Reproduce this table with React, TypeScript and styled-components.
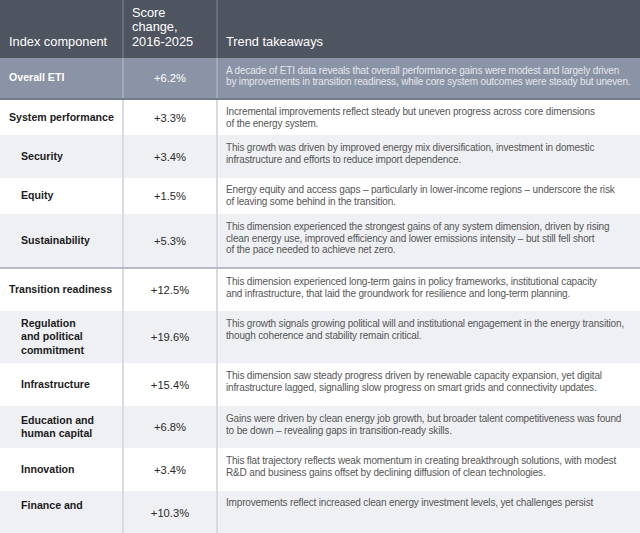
import React from "react";
import styled, { createGlobalStyle } from "styled-components";

const Global = createGlobalStyle`
  html, body { margin: 0; padding: 0; background: #ffffff; overflow: hidden; }
  body { font-family: "Liberation Sans", Helvetica, Arial, sans-serif; }
  * { box-sizing: border-box; }
`;

const Table = styled.div`
  width: 640px;
  display: flex;
  flex-direction: column;
`;

type Tone = "header" | "overall" | "white" | "gray";

const bgOf: Record<Tone, string> = {
  header: "#4f5461",
  overall: "#8b93a6",
  white: "#ffffff",
  gray: "#eff0f3",
};
const lineOf: Record<Tone, string> = {
  header: "#686d79",
  overall: "#a2a9b8",
  white: "#d8dbe1",
  gray: "#d8dbe1",
};

const Row = styled.div<{ $h: number; $tone: Tone; $rule?: string }>`
  display: grid;
  grid-template-columns: 124px 94px 1fr;
  height: ${(p) => p.$h}px;
  background: ${(p) => bgOf[p.$tone]};
  border-bottom: ${(p) => (p.$rule ? `2px solid ${p.$rule}` : "none")};
  --line: ${(p) => lineOf[p.$tone]};
`;

const HeadCell = styled.div<{ $left?: number }>`
  display: flex;
  align-items: flex-end;
  padding: 0 6px 9px ${(p) => p.$left ?? 9}px;
  color: #ffffff;
  font-size: 12.8px;
  line-height: 14.5px;
  border-right: 2px solid var(--line);
  &:last-child { border-right: none; }
`;

const Label = styled.div<{ $indent?: boolean; $top?: boolean; $light?: boolean }>`
  display: flex;
  align-items: ${(p) => (p.$top ? "flex-start" : "center")};
  padding: ${(p) => (p.$top ? "8px" : "0")} 2px 0 ${(p) => (p.$indent ? 21 : 9)}px;
  font-size: 10.6px;
  line-height: 13.5px;
  font-weight: 700;
  white-space: nowrap;
  color: ${(p) => (p.$light ? "#ffffff" : "#1c1c1c")};
  border-right: 2px solid var(--line);
`;

const Value = styled.div<{ $light?: boolean }>`
  display: flex;
  align-items: center;
  justify-content: center;
  font-size: 11.2px;
  color: ${(p) => (p.$light ? "#ffffff" : "#2b2b2b")};
  border-right: 2px solid var(--line);
`;

const Desc = styled.div<{ $light?: boolean; $pt?: number; $lh?: number }>`
  padding: ${(p) => p.$pt ?? 7}px 4px 0 8px;
  font-size: 10px;
  letter-spacing: -0.16px;
  line-height: ${(p) => p.$lh ?? 11.8}px;
  white-space: nowrap;
  color: ${(p) => (p.$light ? "#e4e7ec" : "#565656")};
`;

type Item = {
  label: string[];
  value: string;
  desc: string[];
  h: number;
  tone: Tone;
  indent?: boolean;
  rule?: string;
  top?: boolean;
  pt?: number;
  lh?: number;
};

const items: Item[] = [
  {
    label: ["System performance"],
    value: "+3.3%",
    desc: [
      "Incremental improvements reflect steady but uneven progress across core dimensions",
      "of the energy system.",
    ],
    h: 35,
    tone: "white",
    pt: 6,
  },
  {
    label: ["Security"],
    value: "+3.4%",
    desc: [
      "This growth was driven by improved energy mix diversification, investment in domestic",
      "infrastructure and efforts to reduce import dependence.",
    ],
    h: 43,
    tone: "gray",
    indent: true,
  },
  {
    label: ["Equity"],
    value: "+1.5%",
    desc: [
      "Energy equity and access gaps \u2013 particularly in lower-income regions \u2013 underscore the risk",
      "of leaving some behind in the transition.",
    ],
    h: 36,
    tone: "white",
    indent: true,
    pt: 6,
  },
  {
    label: ["Sustainability"],
    value: "+5.3%",
    desc: [
      "This dimension experienced the strongest gains of any system dimension, driven by rising",
      "clean energy use, improved efficiency and lower emissions intensity \u2013 but still fell short",
      "of the pace needed to achieve net zero.",
    ],
    h: 55,
    tone: "gray",
    indent: true,
    rule: "#b7bbc3",
    lh: 11.5,
  },
  {
    label: ["Transition readiness"],
    value: "+12.5%",
    desc: [
      "This dimension experienced long-term gains in policy frameworks, institutional capacity",
      "and infrastructure, that laid the groundwork for resilience and long-term planning.",
    ],
    h: 42,
    tone: "white",
  },
  {
    label: ["Regulation", "and political", "commitment"],
    value: "+19.6%",
    desc: [
      "This growth signals growing political will and institutional engagement in the energy transition,",
      "though coherence and stability remain critical.",
    ],
    h: 52,
    tone: "gray",
    indent: true,
  },
  {
    label: ["Infrastructure"],
    value: "+15.4%",
    desc: [
      "This dimension saw steady progress driven by renewable capacity expansion, yet digital",
      "infrastructure lagged, signalling slow progress on smart grids and connectivity updates.",
    ],
    h: 43,
    tone: "white",
    indent: true,
  },
  {
    label: ["Education and", "human capital"],
    value: "+6.8%",
    desc: [
      "Gains were driven by clean energy job growth, but broader talent competitiveness was found",
      "to be down \u2013 revealing gaps in transition-ready skills.",
    ],
    h: 42,
    tone: "gray",
    indent: true,
  },
  {
    label: ["Innovation"],
    value: "+3.4%",
    desc: [
      "This flat trajectory reflects weak momentum in creating breakthrough solutions, with modest",
      "R&D and business gains offset by declining diffusion of clean technologies.",
    ],
    h: 43,
    tone: "white",
    indent: true,
  },
  {
    label: ["Finance and"],
    value: "+10.3%",
    desc: ["Improvements reflect increased clean energy investment levels, yet challenges persist"],
    h: 43,
    tone: "gray",
    indent: true,
    top: true,
    pt: 6,
  },
];

const Lines: React.FC<{ lines: string[] }> = ({ lines }) => (
  <span>
    {lines.map((l, i) => (
      <React.Fragment key={i}>
        {l}
        {i < lines.length - 1 && <br />}
      </React.Fragment>
    ))}
  </span>
);

export default function App() {
  return (
    <>
      <Global />
      <Table>
        <Row $h={58} $tone="header">
          <HeadCell>Index component</HeadCell>
          <HeadCell $left={8}>
            <Lines lines={["Score", "change,", "2016-2025"]} />
          </HeadCell>
          <HeadCell $left={8}>Trend takeaways</HeadCell>
        </Row>
        <Row $h={42} $tone="overall" $rule="#737b8d">
          <Label $light>Overall ETI</Label>
          <Value $light>+6.2%</Value>
          <Desc $light $pt={6.5} $lh={11}>
            <Lines
              lines={[
                "A decade of ETI data reveals that overall performance gains were modest and largely driven",
                "by improvements in transition readiness, while core system outcomes were steady but uneven.",
              ]}
            />
          </Desc>
        </Row>
        {items.map((it, i) => (
          <Row key={i} $h={it.h} $tone={it.tone} $rule={it.rule}>
            <Label $indent={it.indent} $top={it.top}>
              <Lines lines={it.label} />
            </Label>
            <Value>{it.value}</Value>
            <Desc $pt={it.pt} $lh={it.lh}>
              <Lines lines={it.desc} />
            </Desc>
          </Row>
        ))}
      </Table>
    </>
  );
}
